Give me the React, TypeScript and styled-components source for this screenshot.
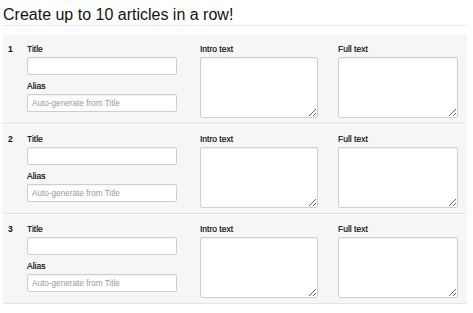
import React from 'react';
import styled, { createGlobalStyle } from 'styled-components';

const GlobalStyle = createGlobalStyle`
  html, body {
    margin: 0;
    padding: 0;
    background: #fff;
  }
  body {
    font-family: "Liberation Sans", Arial, sans-serif;
    color: #222;
  }
`;

const Page = styled.div`
  padding: 6px 6px 0 3px;
`;

const Heading = styled.h3`
  margin: 0 0 9px;
  padding: 0 0 1px;
  font-size: 16px;
  line-height: 18px;
  font-weight: normal;
  color: #111;
  border-bottom: 1px solid #e8e8e8;
`;

const Row = styled.div`
  display: grid;
  grid-template-columns: 19px 173px 138px 1fr;
  align-items: start;
  padding: 9px 9px 5px 5px;
  margin-bottom: 1px;
  background: #f6f6f6;
  border-bottom: 1px solid #e4e4e4;
`;

const Num = styled.div`
  font-size: 8.5px;
  line-height: 10px;
  font-weight: bold;
  color: #111;
`;

const Field = styled.div`
  display: flex;
  flex-direction: column;
`;

const Label = styled.label<{ $gap?: number }>`
  display: block;
  font-size: 8.5px;
  line-height: 10px;
  color: #000;
  -webkit-text-stroke: 0.15px #000;
  margin: ${p => p.$gap ?? 0}px 0 3px;
`;

const TextInput = styled.input`
  box-sizing: border-box;
  width: 150px;
  height: 18px;
  padding: 0 4px;
  border: 1px solid #cfcfcf;
  border-radius: 2px;
  background: #fff;
  box-shadow: inset 0 1px 1px rgba(0, 0, 0, 0.05);
  font-family: "Liberation Sans", Arial, sans-serif;
  font-size: 8.2px;
  color: #333;
  outline: none;

  &::placeholder {
    color: #9a9a9a;
  }
`;

const TextArea = styled.textarea<{ $w: number }>`
  box-sizing: border-box;
  width: ${p => p.$w}px;
  height: 61px;
  margin: 0;
  padding: 3px;
  border: 1px solid #cfcfcf;
  border-radius: 2px;
  background: #fff;
  box-shadow: inset 0 1px 1px rgba(0, 0, 0, 0.05);
  font-family: "Liberation Sans", Arial, sans-serif;
  font-size: 8px;
  outline: none;
  display: block;
`;

const ArticleRow: React.FC<{ n: number }> = ({ n }) => (
  <Row>
    <Num>{n}</Num>
    <Field>
      <Label>Title</Label>
      <TextInput type="text" />
      <Label $gap={6}>Alias</Label>
      <TextInput type="text" placeholder="Auto-generate from Title" />
    </Field>
    <Field>
      <Label>Intro text</Label>
      <TextArea $w={118} />
    </Field>
    <Field>
      <Label>Full text</Label>
      <TextArea $w={120} />
    </Field>
  </Row>
);

const App: React.FC = () => {
  return (
    <>
      <GlobalStyle />
      <Page>
        <Heading>Create up to 10 articles in a row!</Heading>
        {[1, 2, 3].map(n => (
          <ArticleRow key={n} n={n} />
        ))}
      </Page>
    </>
  );
};

export default App;
